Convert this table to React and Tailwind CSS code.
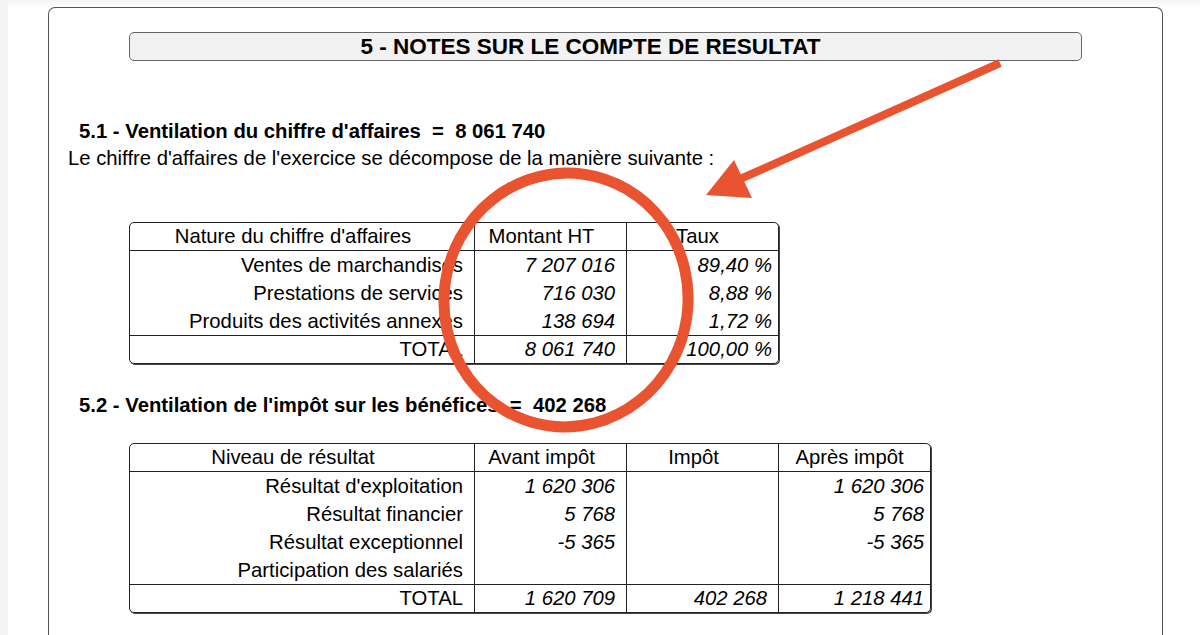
import React from "react";

const font = { fontFamily: '"Liberation Sans", Arial, sans-serif' };

const caRows = [
  ["Ventes de marchandises", "7 207 016", "89,40 %"],
  ["Prestations de services", "716 030", "8,88 %"],
  ["Produits des activités annexes", "138 694", "1,72 %"],
];

const isRows = [
  ["Résultat d'exploitation", "1 620 306", "", "1 620 306"],
  ["Résultat financier", "5 768", "", "5 768"],
  ["Résultat exceptionnel", "-5 365", "", "-5 365"],
  ["Participation des salariés", "", "", ""],
];

const Cell = ({ children, last, italic, head, w, h }) => (
  <div
    className={
      "whitespace-nowrap " +
      w +
      (h ? " h-[27px] leading-[27px]" : " h-[28px] leading-[28px]") +
      (last ? "" : " border-r border-[#222]") +
      (head ? " text-center" : " text-right") +
      (head ? (last ? " pr-[10px]" : " pr-[18px]") : last ? " pr-[6px]" : " pr-[11px]") +
      (italic ? " italic" : "")
    }
  >
    {children}
  </div>
);

const Table = ({ head, rows, total, widths }) => (
  <div className="ml-[80px] inline-flex flex-col border border-[#222] rounded-[5px] shadow-[1px_1px_0_#444] text-[20.3px] text-black">
    <div className="flex border-b border-[#222]">
      {head.map((c, i) => (
        <Cell key={i} head h w={widths[i]} last={i === head.length - 1}>
          {c}
        </Cell>
      ))}
    </div>
    {rows.map((r, j) => (
      <div key={j} className="flex">
        {r.map((c, i) => (
          <Cell key={i} w={widths[i]} italic={i > 0} last={i === r.length - 1}>
            {c}
          </Cell>
        ))}
      </div>
    ))}
    <div className="flex border-t border-[#222]">
      {total.map((c, i) => (
        <Cell key={i} h w={widths[i]} italic={i > 0} last={i === total.length - 1}>
          {c}
        </Cell>
      ))}
    </div>
  </div>
);

export default function App() {
  return (
    <div className="relative h-[635px] w-[1200px] overflow-hidden bg-white" style={font}>
      <div className="flex h-full">
        <div className="w-[8px] bg-[#f3f3f3]" />
        <div className="flex-1 pt-[7px] pl-[40px] pr-[37px] bg-gradient-to-b from-[#f4f4f4] to-white to-[8px]">
          <div className="h-[700px] bg-white border-[1.5px] border-b-0 border-[#555] rounded-t-[7px] flex flex-col items-start">
            <div className="mt-[24px] mx-[80px] self-stretch h-[29px] pr-[30px] bg-[#f2f2f2] border border-[#666] rounded-[5px] flex items-center justify-center">
              <span className="text-[22.5px] leading-[27px] font-bold text-black">5 - NOTES SUR LE COMPTE DE RESULTAT</span>
            </div>

            <h2 className="mt-[58px] ml-[30px] text-[20.3px] leading-[24px] font-bold text-black whitespace-pre">
              {"5.1 - Ventilation du chiffre d'affaires  =  8 061 740"}
            </h2>
            <p className="mt-[3px] ml-[19px] text-[20.3px] leading-[24px] text-black">
              Le chiffre d'affaires de l'exercice se décompose de la manière suivante :
            </p>

            <div className="mt-[52px]">
              <Table
                widths={["w-[345px]", "w-[152px]", "w-[151px]"]}
                head={["Nature du chiffre d'affaires", "Montant HT", "Taux"]}
                rows={caRows}
                total={["TOTAL", "8 061 740", "100,00 %"]}
              />
            </div>

            <h2 className="mt-[29px] ml-[30px] text-[20.3px] leading-[24px] font-bold text-black whitespace-pre">
              {"5.2 - Ventilation de l'impôt sur les bénéfices  =  402 268"}
            </h2>

            <div className="mt-[26px]">
              <Table
                widths={["w-[345px]", "w-[152px]", "w-[152px]", "w-[151px]"]}
                head={["Niveau de résultat", "Avant impôt", "Impôt", "Après impôt"]}
                rows={isRows}
                total={["TOTAL", "1 620 709", "402 268", "1 218 441"]}
              />
            </div>
          </div>
        </div>
      </div>

      <svg className="absolute inset-0 pointer-events-none" width="1200" height="635" viewBox="0 0 1200 635">
        <line x1="1000" y1="63" x2="738" y2="180" stroke="#e9532f" strokeWidth="8" />
        <polygon points="706,195 734,160 752,198" fill="#e9532f" />
        <ellipse
          cx="566"
          cy="300"
          rx="122"
          ry="127"
          fill="none"
          stroke="#e9532f"
          strokeWidth="11"
          transform="rotate(8 566 300)"
        />
      </svg>
    </div>
  );
}
